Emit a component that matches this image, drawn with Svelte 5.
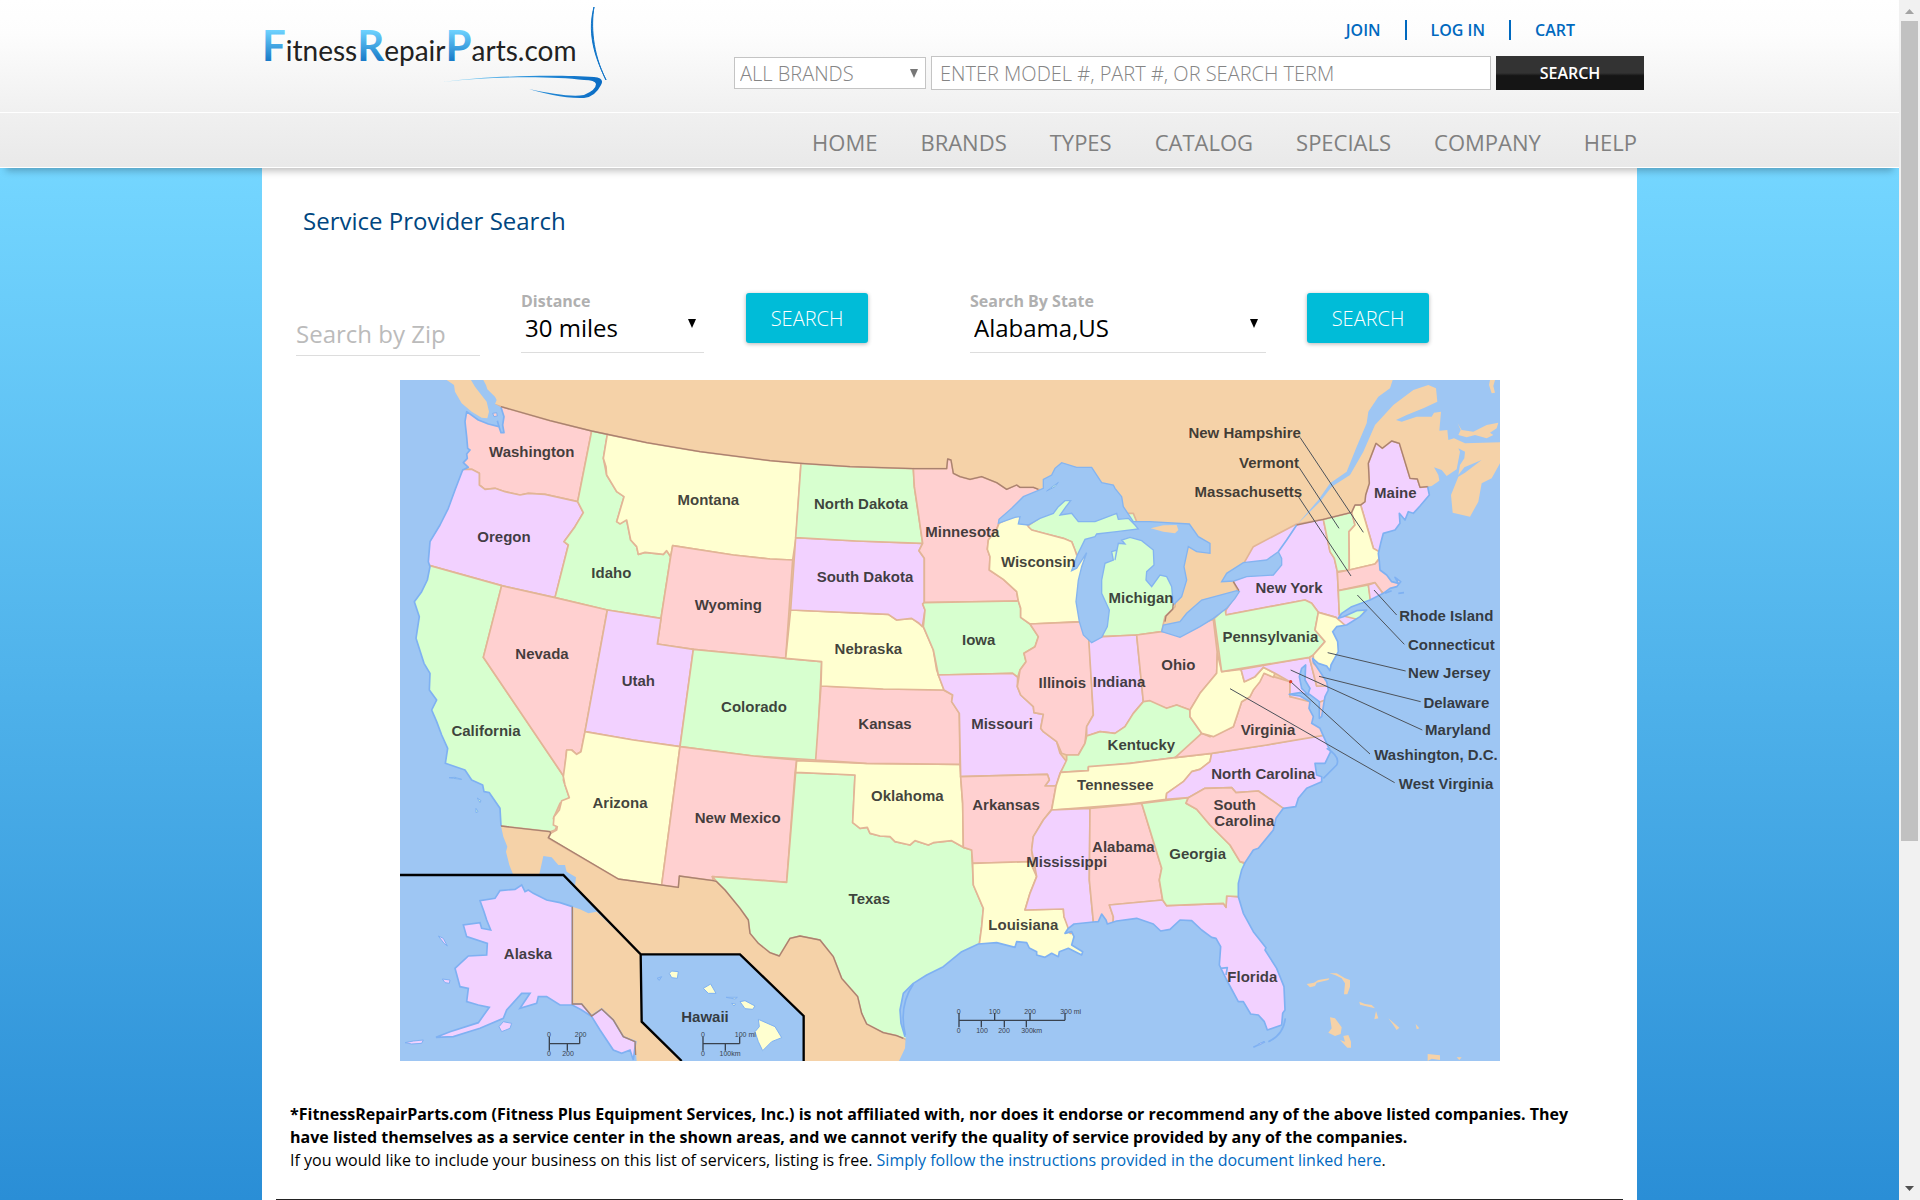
<script>
  const nav = ['HOME', 'BRANDS', 'TYPES', 'CATALOG', 'SPECIALS', 'COMPANY', 'HELP'];

  const G = '#d7ffcf', P = '#f2d1ff', R = '#ffd0d0', Y = '#ffffd0';

  const states = [
    [R, '303,80 450,122 575,153 533,365 435,343 385,340 360,345 315,335 285,325 255,328 238,315 238,280 215,268 190,268 160,230 180,80 240,60'],
    [P, '215,268 238,280 238,315 255,328 285,325 315,335 360,345 385,340 435,343 533,365 550,398 525,440 492,485 505,495 465,653 305,617 90,557 60,550 60,480 160,268'],
    [G, '575,153 622,163 610,235 620,285 650,335 672,350 650,425 680,420 692,480 710,500 715,523 735,517 790,523 800,512 812,530 783,715 622,690 465,653 505,495 492,485 525,440 550,398 533,365'],
    [Y, '622,163 740,188 900,215 1110,242 1203,250 1188,473 1178,540 1110,537 1000,525 818,497 812,530 800,512 790,523 735,517 715,523 710,500 692,480 680,420 660,432 650,425 672,350 650,335 620,285 618,260 610,235'],
    [R, '818,497 1000,525 1110,537 1178,540 1157,835 880,808 772,792 783,715 812,530'],
    [G, '90,557 305,617 250,832 492,1190 490,1200 508,1253 480,1270 460,1315 470,1340 465,1350 450,1355 303,1338 100,1338 -20,660'],
    [R, '305,617 465,653 622,690 555,1055 543,1115 530,1123 515,1110 500,1110 498,1130 492,1190 250,832'],
    [P, '622,690 783,715 772,792 880,808 840,1100 700,1080 555,1055'],
    [G, '880,808 1157,835 1265,845 1250,1140 1060,1128 840,1100'],
    [Y, '555,1055 700,1080 840,1100 785,1515 655,1497 445,1375 452,1360 470,1350 472,1340 460,1335 462,1310 478,1290 485,1262 508,1253 495,1215 490,1190 498,1130 500,1110 515,1110 530,1123 543,1115'],
    [R, '840,1100 1060,1128 1190,1140 1185,1180 1160,1507 937,1490 940,1502 838,1488 835,1522 785,1515'],
    [G, '1187,1177 1365,1185 1358,1328 1380,1345 1402,1342 1410,1360 1440,1368 1470,1370 1485,1385 1530,1395 1545,1382 1585,1395 1600,1388 1655,1382 1690,1402 1715,1410 1720,1515 1750,1585 1745,1640 1738,1692 1738,1760 1560,2000 1510,1975 1490,1967 1450,1958 1400,1932 1385,1900 1373,1850 1325,1795 1300,1730 1260,1680 1200,1668 1170,1675 1138,1728 1110,1718 1075,1690 1050,1660 1045,1620 1020,1585 975,1530 950,1505 937,1490 1160,1507'],
    [Y, '1190,1142 1400,1150 1680,1153 1682,1190 1688,1270 1690,1402 1655,1382 1600,1388 1585,1395 1545,1382 1530,1395 1485,1385 1470,1370 1440,1368 1410,1360 1402,1342 1380,1345 1358,1328 1365,1185 1187,1177'],
    [R, '1263,918 1450,927 1630,930 1658,945 1655,965 1678,1000 1680,1153 1400,1150 1247,1140'],
    [Y, '1172,690 1465,703 1490,720 1535,715 1570,740 1600,810 1610,870 1632,930 1450,927 1263,918 1265,845 1157,835'],
    [P, '1187,473 1370,483 1568,490 1557,512 1573,535 1573,668 1568,672 1575,690 1567,740 1555,728 1535,715 1490,720 1465,703 1172,690'],
    [G, '1203,250 1350,260 1540,266 1543,320 1555,400 1568,490 1370,483 1187,473'],
    [R, '1540,266 1640,266 1643,237 1653,240 1660,280 1680,290 1710,298 1745,290 1790,308 1820,328 1850,315 1860,322 1900,322 1915,328 1960,340 1797,430 1790,448 1765,480 1762,508 1770,530 1768,570 1810,598 1850,635 1855,663 1573,668 1573,535 1557,512 1568,490 1555,400 1543,320'],
    [G, '1573,668 1855,663 1862,685 1862,712 1890,732 1915,770 1905,800 1872,820 1878,845 1860,870 1853,892 1838,880 1615,885 1600,810 1570,740 1575,690 1568,672'],
    [G, '1880,440 1940,400 2010,340 2060,400 2200,400 2220,450 2040,530 2030,525 2015,485 1990,475 1940,462 1895,450'],
    [Y, '1797,430 1860,400 1885,440 1895,450 1940,462 1990,475 2015,485 2025,510 2030,525 2080,500 2040,725 1890,732 1862,712 1862,685 1855,663 1850,635 1810,598 1768,570 1770,530 1762,508 1765,480 1790,448'],
    [G, '2090,480 2200,460 2330,560 2325,680 2295,710 2285,755 2210,765 2110,770 2080,700 2080,560'],
    [P, '1615,885 1838,880 1853,892 1852,920 1862,945 1900,980 1902,998 1930,1003 1922,1045 1930,1055 1970,1085 1980,1120 2000,1145 1980,1180 1968,1218 1935,1218 1948,1200 1942,1183 1682,1190 1678,1000 1655,965 1658,945 1632,930'],
    [R, '1682,1190 1942,1183 1948,1200 1935,1218 1968,1218 1955,1288 1930,1320 1900,1370 1895,1410 1900,1445 1718,1450 1715,1410 1690,1402 1688,1270'],
    [Y, '1718,1450 1890,1445 1910,1490 1890,1540 1875,1590 1990,1587 1992,1610 2010,1645 2080,1760 1800,1780 1738,1760 1738,1692 1745,1640 1750,1585 1720,1515'],
    [R, '1890,732 2065,725 2068,780 2078,970 2080,1005 2060,1040 2055,1090 2035,1125 2000,1125 1985,1120 1970,1085 1930,1055 1922,1045 1930,1003 1902,998 1900,980 1862,945 1852,920 1860,870 1878,845 1872,820 1905,800 1915,770'],
    [P, '2066,775 2110,770 2210,765 2230,965 2200,1000 2175,1040 2145,1060 2100,1055 2060,1068 2060,1040 2080,1005 2078,970'],
    [R, '2210,765 2285,755 2340,750 2440,718 2452,820 2450,880 2400,940 2370,990 2330,975 2300,985 2230,965'],
    [G, '2230,965 2250,962 2300,985 2330,975 2370,990 2370,1010 2405,1060 2365,1110 2325,1133 2190,1150 2065,1163 2065,1172 1982,1177 2000,1140 2000,1125 2035,1125 2055,1090 2060,1068 2100,1055 2145,1060 2175,1040 2200,1000'],
    [Y, '1982,1177 2065,1172 2065,1160 2190,1150 2325,1133 2435,1120 2430,1145 2400,1168 2375,1175 2350,1205 2300,1240 2298,1258 2190,1272 1955,1290 1968,1218'],
    [P, '1955,1290 2070,1285 2068,1500 2080,1625 2080,1660 2010,1660 1992,1610 1990,1587 1875,1590 1890,1540 1910,1490 1895,1410 1900,1370 1930,1320'],
    [R, '2070,1285 2225,1270 2285,1465 2278,1500 2288,1560 2128,1575 2140,1610 2138,1650 2080,1650 2080,1625 2068,1500'],
    [P, '2128,1575 2288,1560 2300,1577 2470,1570 2478,1582 2480,1548 2515,1550 2560,1550 2700,1750 2680,1960 2580,1970 2440,1800 2440,1700 2260,1700 2138,1670 2140,1610'],
    [G, '2225,1270 2365,1253 2358,1270 2390,1288 2430,1335 2490,1395 2520,1445 2560,1460 2560,1550 2515,1550 2480,1548 2478,1582 2470,1570 2300,1577 2288,1560 2278,1500 2285,1465'],
    [P, '2435,1120 2600,1095 2770,1063 2840,1060 2840,1200 2700,1310 2650,1285 2575,1233 2508,1238 2495,1223 2415,1225 2365,1253 2298,1258 2300,1240 2350,1205 2375,1175 2400,1168 2430,1145'],
    [R, '2365,1253 2415,1225 2495,1223 2508,1238 2575,1233 2650,1285 2680,1310 2540,1450 2520,1445 2490,1395 2430,1335 2390,1288 2358,1270'],
    [R, '2325,1133 2405,1060 2430,1070 2500,1040 2510,1010 2525,965 2550,950 2560,930 2592,880 2620,890 2670,905 2670,950 2790,960 2790,1063 2600,1095 2435,1120'],
    [Y, '2452,820 2465,875 2523,868 2533,905 2565,890 2590,862 2625,880 2620,892 2592,880 2580,905 2560,930 2550,950 2525,965 2510,1010 2500,1040 2470,1055 2440,1070 2405,1060 2370,1010 2370,990 2400,940 2450,880'],
    [P, '2523,868 2728,832 2750,918 2785,918 2800,950 2750,970 2670,950 2670,905 2625,880 2590,862 2565,890 2533,905'],
    [R, '2728,832 2745,822 2790,900 2785,918 2750,918'],
    [P, '2475,705 2478,690 2515,635 2500,605 2560,500 2690,432 2770,418 2790,515 2803,535 2812,575 2818,705 2910,680 2910,700 2830,760 2808,712 2755,697 2735,670 2715,660'],
    [G, '2443,715 2475,685 2478,705 2715,660 2735,670 2755,697 2745,750 2775,785 2740,825 2728,832 2465,875'],
    [Y, '2755,697 2808,712 2840,740 2840,820 2790,890 2740,850 2740,825 2775,785 2745,750'],
    [G, '2770,418 2855,397 2865,435 2847,455 2848,570 2812,575 2803,535 2790,515'],
    [P, '2882,375 2895,365 2897,345 2908,310 2905,250 2928,190 2947,205 2975,183 2998,190 3030,295 3052,297 3060,322 3083,320 3120,340 3040,450 2960,530 2938,520 2920,505'],
    [Y, '2855,397 2865,375 2882,375 2920,505 2938,515 2938,535 2925,552 2848,570 2847,455 2865,435'],
    [R, '2812,577 2848,570 2925,552 2940,535 2980,540 3020,600 2980,660 2945,635 2925,608 2815,632'],
    [G, '2815,632 2905,615 2912,658 2880,720 2818,705'],
    [P, '2905,615 2925,608 2945,635 2960,670 2912,670']
  ];

  const westCoast = '303,82 312,110 308,135 312,158 303,158 297,140 265,132 235,120 200,95 195,125 200,170 203,205 210,210 200,222 202,235 190,248 205,262 188,270 165,330 145,385 120,435 90,485 85,545 90,560 82,600 65,635 43,665 58,710 48,775 72,850 90,880 88,930 110,960 95,990 110,1025 125,1065 143,1105 136,1150 195,1170 215,1200 248,1215 252,1235 268,1238 300,1285 303,1338';

  const eastCoast = '1515,1970 1503,1930 1500,1890 1510,1840 1540,1810 1580,1785 1630,1760 1685,1715 1735,1692 1790,1688 1845,1702 1850,1685 1880,1688 1888,1704 1910,1715 1910,1725 1935,1732 1955,1720 1975,1730 1978,1715 2005,1705 2045,1725 2048,1715 2015,1695 2022,1670 2015,1655 1995,1660 2005,1645 2022,1632 2080,1626 2095,1625 2105,1602 2118,1620 2122,1632 2150,1623 2210,1615 2260,1632 2282,1653 2310,1648 2340,1620 2375,1622 2405,1650 2435,1672 2448,1675 2462,1700 2458,1755 2480,1800 2515,1865 2530,1865 2552,1902 2575,1905 2593,1925 2602,1950 2645,1935 2648,1900 2655,1890 2652,1820 2630,1765 2595,1710 2598,1703 2560,1655 2530,1600 2515,1550 2515,1510 2525,1470 2535,1448 2560,1410 2575,1405 2620,1350 2628,1315 2650,1285 2687,1280 2695,1255 2720,1225 2765,1205 2765,1190 2750,1185 2745,1150 2775,1150 2792,1115 2780,1090 2768,1063 2760,1045 2735,1030 2740,1010 2727,985 2730,965 2700,948 2668,943 2700,938 2725,945 2705,925 2698,890 2705,865 2717,855 2715,900 2730,925 2725,940 2745,955 2758,965 2758,1015 2765,1010 2775,950 2785,930 2780,905 2760,875 2740,845 2738,835 2755,850 2780,858 2790,872 2793,855 2815,815 2813,785 2798,755 2810,740 2840,735 2880,710 2900,690 2870,692 2830,710 2815,715 2825,700 2855,680 2910,660 2950,640 2970,625 2990,620 3002,605 2985,592 2995,610 2975,605 2960,585 2940,570 2938,545 2935,520 2942,490 2950,460 2985,450 3000,430 2998,400 3015,420 3025,395 3040,400 3060,378 3088,345 3083,320';

  const waters = [
    `0,0 250,0 258,15 262,28 285,50 290,60 285,72 303,82 ${westCoast} 310,1370 322,1400 318,1415 328,1455 340,1485 0,1485`,
    `1497,2043 1515,2005 1517,1972 ${eastCoast} 3095,318 3118,302 3115,285 3102,262 3125,270 3140,288 3170,268 3180,215 3175,205 3195,215 3193,235 3180,255 3175,285 3193,262 3245,240 3195,278 3175,290 3153,345 3158,398 3210,410 3235,365 3245,310 3275,295 3300,250 3300,2043`,
    '2978,0 2970,25 2935,50 2905,95 2900,130 2870,200 2840,275 2790,310 2755,360 2690,435 2760,365 2795,320 2850,285 2890,215 2925,135 2980,75 3040,30 3085,15 3108,25 3112,65 3070,85 3020,105 2988,120 3005,125 3050,110 3095,110 3102,98 3123,95 3118,152 3142,150 3145,180 3162,175 3195,190 3300,187 3300,0',
    '418,1483 430,1428 455,1432 475,1455 495,1455 500,1475 528,1492 525,1518 490,1485'
  ];

  const lakes = [
    '1797,418 1795,430 1845,412 1860,410 1855,432 1885,435 1920,415 1960,400 1975,380 1995,362 2012,362 1998,380 1980,405 2015,400 2035,425 2085,425 2150,400 2155,418 2185,415 2205,435 2215,447 2150,455 2090,462 2085,470 2055,478 2032,525 2015,572 2030,565 2060,518 2045,560 2035,600 2028,665 2038,725 2050,765 2075,788 2105,772 2122,740 2128,690 2105,640 2105,600 2115,550 2140,540 2135,515 2150,510 2145,540 2155,490 2175,492 2165,480 2190,472 2225,482 2260,510 2262,555 2240,575 2238,600 2255,620 2280,585 2300,590 2315,620 2320,675 2345,650 2360,600 2352,560 2365,500 2390,515 2430,520 2430,490 2395,470 2368,432 2250,425 2200,425 2170,380 2165,350 2145,325 2140,315 2105,308 2075,262 2030,262 1985,248 1965,265 1955,285 1930,298 1930,325 1870,350 1835,385',
    '2285,755 2290,735 2340,725 2360,700 2405,660 2510,632 2518,635 2505,655 2480,685 2440,715 2400,740 2340,772',
    '2465,605 2480,580 2530,548 2600,540 2635,515 2645,535 2645,555 2620,585 2540,590 2502,603'
  ];

  const islands = [
    ['#f5d2a8', '140,0 162,15 165,35 185,70 215,95 245,113 262,115 267,95 260,65 240,40 225,20 213,0'],
    ['#f5d2a8', '3173,130 3185,150 3220,155 3260,135 3295,128 3290,145 3270,158 3280,165 3260,175 3225,165 3200,172 3175,165 3182,150'],
    ['#f5d2a8', '3270,0 3285,0 3280,18 3285,38 3275,40 3267,15'],
    ['#f5d2a8', '2252,445 2290,436 2330,435 2335,450 2325,460 2290,455'],
    ['#f5d2a8', '2720,1812 2730,1822 2745,1818 2750,1808 2785,1800 2788,1795 2755,1800 2742,1808'],
    ['#f5d2a8', '2788,1780 2810,1780 2835,1795 2850,1800 2850,1820 2842,1843 2832,1843 2835,1810 2825,1795 2805,1785'],
    ['#f5d2a8', '2790,1912 2805,1915 2825,1942 2822,1962 2805,1968 2785,1958 2795,1945'],
    ['#f5d2a8', '2830,1968 2845,1965 2853,1985 2853,2003 2842,2003 2820,1980 2835,1985'],
    ['#f5d2a8', '2878,1865 2895,1872 2915,1875 2925,1885 2905,1880 2880,1874'],
    ['#f5d2a8', '2928,1893 2935,1915 2923,1918'],
    ['#f5d2a8', '2965,1915 2998,1943 2990,1950 2978,1932'],
    ['#f5d2a8', '3047,1932 3058,1945 3050,1948'],
    ['#f5d2a8', '3083,2022 3120,2026 3120,2040 3095,2036 3083,2043'],
    ['#f5d2a8', '3170,2032 3185,2032 3178,2040']
  ];

  const borders = [
    '303,80 450,122 575,153 740,188 900,215 1110,242 1203,250 1350,260 1540,266 1640,266 1643,237 1653,240 1660,280 1680,290 1710,298 1745,290 1790,308 1820,328 1850,315 1860,322 1900,322 1915,328',
    '303,1338 450,1355 452,1360 445,1373 655,1497 835,1522 838,1488 940,1502 950,1505 975,1530 1020,1585 1045,1620 1050,1660 1075,1690 1110,1718 1138,1728 1170,1675 1200,1668 1260,1680 1300,1730 1325,1795 1373,1850 1385,1900 1400,1932 1450,1958 1490,1967 1510,1975',
    '2690,435 2770,418 2855,397 2865,375 2882,375 2895,365 2897,345 2908,310 2905,250 2928,190 2947,205 2975,183 2998,190 3030,295 3052,297 3060,322 3083,320',
    '2320,670 2318,688 2298,708 2295,725',
    '2500,605 2517,632'
  ];

  const alaska = '517,1580 480,1568 440,1560 400,1540 385,1530 375,1535 365,1515 345,1528 300,1532 285,1555 240,1562 252,1595 260,1620 272,1650 245,1645 240,1628 190,1635 200,1670 262,1690 260,1725 205,1728 165,1765 180,1820 205,1825 200,1865 235,1875 268,1882 235,1928 150,1955 108,1972 160,1970 240,1945 310,1915 320,1890 365,1840 390,1840 360,1885 410,1870 415,1850 440,1850 480,1875 517,1875 545,1890 575,1910 600,1950 640,2010 665,2020 690,2010 700,2040 707,1985 670,1970 640,1920 605,1887 575,1908 545,1872 517,1872';

  const smallIslands = [
    [P, '297,1940 310,1925 335,1930 330,1945 305,1955'],
    [P, '127,1797 150,1800 148,1810 135,1808'],
    [P, '115,1668 130,1675 142,1698 132,1690'],
    [P, '15,1988 40,1983 70,1980 65,1990 35,1992'],
    [Y, '808,1780 815,1773 835,1775 832,1795 815,1793'],
    [Y, '910,1825 932,1812 948,1840 925,1840'],
    [Y, '978,1852 1012,1852 1005,1857'],
    [Y, '995,1870 1007,1872 1002,1878'],
    [Y, '1020,1865 1035,1862 1065,1878 1058,1888 1035,1886'],
    [Y, '1075,1918 1125,1940 1145,1973 1115,1985 1088,2012 1075,1985 1065,1955 1078,1940'],
    ['#9ec6f3', '771,1795 785,1790 778,1801'],
    [G, '147,1193 160,1195 185,1198 165,1192'],
    [G, '232,1254 243,1262 240,1268'],
    [G, '228,1285 234,1295 228,1298'],
    [G, '1940,333 1975,307 1965,320'],
    [R, '278,100 290,98 292,108 282,110'],
    [P, '2575,1992 2592,1985 2580,1995']
  ];

  const leaders = [
    '2700,172 2890,457', '2697,262 2817,445', '2694,348 2853,588', '2922,630 2990,705',
    '2872,645 3013,793', '2783,818 3017,873', '2757,889 3062,965', '2672,870 3067,1050',
    '2672,905 2910,1122', '2490,926 2984,1208'
  ];

  const labels = [
    ['Washington', 395, 232], ['Montana', 925, 376], ['Oregon', 312, 487], ['Idaho', 634, 595],
    ['Wyoming', 985, 690], ['Nevada', 426, 838], ['Utah', 715, 917], ['Colorado', 1062, 995],
    ['California', 258, 1069], ['Arizona', 660, 1283], ['New Mexico', 1013, 1328],
    ['North Dakota', 1383, 388], ['South Dakota', 1395, 607], ['Minnesota', 1687, 471],
    ['Wisconsin', 1915, 562], ['Nebraska', 1405, 822], ['Iowa', 1736, 796], ['Illinois', 1987, 924],
    ['Indiana', 2157, 921], ['Michigan', 2223, 669], ['Kansas', 1455, 1048], ['Missouri', 1806, 1048],
    ['Oklahoma', 1522, 1262], ['Texas', 1408, 1572], ['Arkansas', 1818, 1291], ['Louisiana', 1870, 1650],
    ['Mississippi', 2000, 1461], ['Alabama', 2170, 1415], ['Tennessee', 2146, 1229], ['Kentucky', 2224, 1111],
    ['Georgia', 2393, 1436], ['Florida', 2557, 1807], ['South', 2504, 1291], ['Carolina', 2533, 1337],
    ['North Carolina', 2590, 1197], ['Virginia', 2604, 1065], ['Ohio', 2335, 871],
    ['Pennsylvania', 2611, 785], ['New York', 2667, 640], ['Maine', 2986, 355],
    ['New Hampshire', 2534, 174], ['Vermont', 2607, 264], ['Massachusetts', 2545, 351],
    ['Rhode Island', 3139, 723], ['Connecticut', 3154, 809], ['New Jersey', 3148, 893],
    ['Delaware', 3169, 983], ['Maryland', 3174, 1066], ['Washington, D.C.', 3108, 1139],
    ['West Virginia', 3138, 1226], ['Alaska', 384, 1737], ['Hawaii', 915, 1926]
  ];

  const scaleText = [
    ['0', 447, 1971], ['200', 542, 1971], ['0', 447, 2029], ['200', 504, 2029],
    ['0', 909, 1971], ['100 mi', 1036, 1971], ['0', 909, 2029], ['100km', 990, 2029],
    ['0', 1676, 1902], ['100', 1784, 1902], ['200', 1890, 1902], ['300 mi', 2012, 1902],
    ['0', 1676, 1960], ['100', 1746, 1960], ['200', 1812, 1960], ['300km', 1895, 1960]
  ];
</script>

<div class="window">
  <div class="page">
    <header>
      <div class="top">
        <div class="inner top-row">
          <a class="logo" href="/" aria-label="FitnessRepairParts.com">
            <svg width="350" height="104" viewBox="0 0 350 104">
              <defs>
                <linearGradient id="cap" x1="0" y1="0" x2="0" y2="1">
                  <stop offset="0.2" stop-color="#6fd3ff" /><stop offset="0.8" stop-color="#1a7cc9" />
                </linearGradient>
                <linearGradient id="swoosh" x1="0" y1="0" x2="1" y2="0">
                  <stop offset="0" stop-color="#8edcfb" /><stop offset="0.5" stop-color="#2b93dc" /><stop offset="1" stop-color="#0a6cc4" />
                </linearGradient>
              </defs>
              <text x="0" y="61" class="brand"><tspan class="cap">F</tspan>itness<tspan class="cap">R</tspan>epair<tspan class="cap">P</tspan>arts.com</text>
              <path d="M332 7C329 25 330 52 344 80C336 63 324 37 332 7Z" fill="#0f74c8" stroke="#0f74c8" />
              <path d="M181 82C230 75 300 75 332 77Q343 78 339 85Q333 97 322 98C305 99 280 93 267 89C290 94 310 97 322 95Q334 90 334 84Q333 80 322 80C290 76 230 76 181 82Z" fill="url(#swoosh)" />
            </svg>
          </a>
          <div class="tools">
            <ul class="account">
              <li><a href="/join">JOIN</a></li>
              <li><a href="/login">LOG IN</a></li>
              <li><a href="/cart">CART</a></li>
            </ul>
            <form class="finder">
              <span class="pick">
                <select aria-label="Brand"><option>ALL BRANDS</option></select>
                <svg width="8" height="9" viewBox="0 0 8 9"><path d="M0 0H8L4 9Z" fill="#777" /></svg>
              </span>
              <input type="text" aria-label="Search term" placeholder="ENTER MODEL #, PART #, OR SEARCH TERM" />
              <button type="button">SEARCH</button>
            </form>
          </div>
        </div>
      </div>
      <nav>
        <ul class="inner">
          {#each nav as item}
            <li><a href="/{item.toLowerCase()}">{item}</a></li>
          {/each}
        </ul>
      </nav>
    </header>

    <main>
      <h1>Service Provider Search</h1>
      <form class="search">
        <input class="zip" type="text" aria-label="Zip" placeholder="Search by Zip" />
        <div class="field distance">
          <label for="distance">Distance</label>
          <select id="distance"><option>30 miles</option></select>
          <svg width="8" height="9" viewBox="0 0 8 9"><path d="M0 0H8L4 9Z" /></svg>
        </div>
        <button type="button">SEARCH</button>
        <div class="field state">
          <label for="state">Search By State</label>
          <select id="state"><option>Alabama,US</option></select>
          <svg width="8" height="9" viewBox="0 0 8 9"><path d="M0 0H8L4 9Z" /></svg>
        </div>
        <button type="button">SEARCH</button>
      </form>

      <svg class="map" viewBox="0 0 3300 2043" role="img" aria-label="Map of the United States">
        <rect width="3300" height="2043" fill="#f5d2a8" />
        <g stroke="#e2b596" stroke-width="5" stroke-linejoin="round">
          {#each states as [fill, pts]}<polygon points={pts} {fill} />{/each}
        </g>
        <g fill="#9ec6f3">
          {#each waters as pts}<polygon points={pts} />{/each}
        </g>
        <g fill="#9ec6f3" stroke="#84b4f0" stroke-width="4">
          {#each lakes as pts}<polygon points={pts} />{/each}
        </g>
        <g fill="none" stroke="#7fb1f2" stroke-width="5" stroke-linejoin="round">
          <polyline points={westCoast} />
          <polyline points={eastCoast} />
          <polyline points="2690,435 2660,480 2635,515" />
          <path d="M2780 1105Q2822 1130 2810 1155L2770 1195M2656 1915Q2650 1965 2605 1985M2595 1985L2560 2002M1540 1812Q1495 1880 1516 1965M2955 640L2975 632M2995 640L3012 638M297 140L292 122" />
          <path d="M2461 1765L2482 1763L2478 1785" />
        </g>
        {#each islands as [fill, pts]}<polygon points={pts} {fill} />{/each}
        <g fill="none" stroke="#a98270" stroke-width="4" stroke-linejoin="round">
          {#each borders as pts}<polyline points={pts} />{/each}
        </g>

        <polygon fill="#9ec6f3" points="0,1485 490,1485 722,1723 725,1925 845,2043 0,2043" />
        <polygon fill="#f5d2a8" points="517,1580 540,1588 565,1600 590,1595 722,1723 725,1925 845,2043 710,2043 705,1985 670,1970 640,1920 605,1887 575,1908 545,1872 517,1872" />
        <polygon fill="#9ec6f3" points="722,1723 1020,1723 1211,1908 1211,2043 845,2043 725,1925" />
        <polygon fill={P} stroke="#7fb1f2" stroke-width="5" points={alaska} />
        <polyline fill="none" stroke="#a98270" stroke-width="4" points="517,1580 517,1872 545,1872 575,1908 605,1887 640,1920 670,1970 705,1985 707,2025" />
        <g stroke="#7fb1f2" stroke-width="3">
          {#each smallIslands as [fill, pts]}<polygon points={pts} {fill} />{/each}
        </g>
        <path d="M0 1485H490L722 1723H1020L1211 1908V2043M722 1723L725 1925L845 2043" fill="none" stroke="#000" stroke-width="7" />

        <g fill="none" stroke="#4c525a" stroke-width="3">
          {#each leaders as pts}<polyline points={pts} />{/each}
        </g>
        <circle cx="2672" cy="905" r="5" fill="#d8432f" />
        <path d="M448 1970V2012M448 1991H539M539 1970V1991M502 1991V2012M909 1970V2012M909 1991H1019M1019 1970V1991M976 1991V2012M1677 1899V1942M1677 1921H1995M1784 1899V1921M1890 1899V1921M1995 1899V1921M1744 1921V1942M1813 1921V1942M1879 1921V1942" fill="none" stroke="#39424e" stroke-width="4" />
        {#each scaleText as [t, x, y]}<text class="tick" {x} {y}>{t}</text>{/each}
        {#each labels as [t, x, y]}<text class="name" {x} {y}>{t}</text>{/each}
      </svg>

      <p>
        <strong>*FitnessRepairParts.com (Fitness Plus Equipment Services, Inc.) is not affiliated with, nor does it endorse or recommend any of the above listed companies. They have listed themselves as a service center in the shown areas, and we cannot verify the quality of service provided by any of the companies.</strong><br />
        If you would like to include your business on this list of servicers, listing is free.
        <a href="/listing">Simply follow the instructions provided in the document linked here</a>.
      </p>
      <hr />
    </main>
  </div>
  <div class="scrollbar" aria-hidden="true">
    <svg width="9" height="5" viewBox="0 0 9 5"><path d="M0 5L4.500 0L9 5Z" fill="#a3a3a3" /></svg>
    <div class="thumb"></div>
    <svg width="9" height="5" viewBox="0 0 9 5"><path d="M0 0L4.500 5L9 0Z" fill="#505050" /></svg>
  </div>
</div>

<style>
  .window {
    display: flex;
    height: 100vh;
    overflow: hidden;
    font-family: 'Open Sans', sans-serif;
    color: #000;
  }
  .page {
    flex: 1;
    min-width: 0;
    overflow: hidden;
    background: linear-gradient(#74d6ff 168px, #2a8ed6);
  }
  a { text-decoration: none; color: #0069bf; }
  ul { list-style: none; margin: 0; padding: 0; }
  button, input, select {
    font-family: inherit;
    box-sizing: border-box;
    margin: 0;
    appearance: none;
    border-radius: 0;
  }
  header {
    position: relative;
    box-shadow: 0 9px 7px -6px rgba(0, 0, 0, 0.25);
  }
  .inner {
    box-sizing: border-box;
    width: 100%;
    max-width: 1375px;
    margin: 0 auto;
  }
  .top {
    height: 112px;
    background: linear-gradient(#fff, #fdfdfd 30%, #f0f0f0);
    border-bottom: 1px solid #fff;
  }
  .top-row { display: flex; justify-content: space-between; }
  .logo svg { display: block; }
  .brand {
    font-family: Lato, sans-serif;
    font-size: 28px;
    fill: #222;
  }
  .cap { font-size: 42px; fill: url(#cap); font-weight: bold; }
  .tools { flex: 0 0 910px; margin-right: -7px; }
  .account { display: flex; justify-content: flex-end; padding: 20px 69px 0 0; line-height: 20px; }
  .account li { font-size: 16px; font-weight: 600; }
  .account li + li { border-left: 2px solid #0069bf; margin-left: 24px; padding-left: 24px; }
  .finder { display: flex; gap: 5px; align-items: center; padding-top: 16px; }
  .pick, .field { position: relative; }
  .finder select, .finder input {
    border: 1px solid #c4c4c4;
    background: #fff;
    color: #858585;
    font-size: 20px;
    font-weight: 300;
    display: block;
  }
  .finder select { width: 192px; height: 32px; padding: 0 5px; }
  .pick svg { position: absolute; right: 8px; top: 12px; }
  .finder input { flex: 1; min-width: 0; height: 34px; padding: 0 8px; }
  .finder input::placeholder { color: #858585; opacity: 1; }
  .finder button {
    width: 148px;
    height: 34px;
    border: 0;
    color: #fff;
    font-size: 16px;
    font-weight: 600;
    background: linear-gradient(#333 50%, #151515 58%);
  }
  nav {
    height: 54px;
    background: linear-gradient(#f0f0f0, #e9e9e9);
    border-bottom: 1px solid #fff;
  }
  nav ul { display: flex; justify-content: flex-end; gap: 43px; line-height: 58px; }
  nav a { font-size: 22px; font-weight: 500; color: #808080; }
  main {
    box-sizing: border-box;
    width: 100%;
    max-width: 1375px;
    min-height: 1040px;
    margin: 0 auto;
    padding: 35px 14px 0;
    background: #fff;
  }
  h1 { margin: 0 0 0 27px; font-size: 24px; line-height: 36px; font-weight: 500; color: #004680; }
  .search { display: flex; align-items: flex-start; margin: 54px 0 0 20px; height: 64px; }
  .zip {
    width: 184px;
    height: 47px;
    margin: 16px 41px 0 0;
    padding: 2px 0 0;
    border: 0;
    border-bottom: 1px solid #ddd;
    font-size: 24px;
    color: #000;
  }
  .zip::placeholder { color: #bbb; opacity: 1; }
  .field { height: 59px; border-bottom: 1px solid #ddd; }
  .distance { width: 183px; margin-right: 42px; }
  .state { width: 296px; margin: 0 41px 0 102px; }
  .field label { display: block; font-size: 16px; line-height: 16px; font-weight: 700; color: #b0b0b0; }
  .field select {
    width: 100%;
    height: 36px;
    padding: 0 4px;
    border: 0;
    background: transparent;
    font-size: 24px;
    color: #000;
    display: block;
  }
  .field svg { position: absolute; right: 8px; top: 26px; }
  .search button {
    width: 122px;
    height: 50px;
    border: 0;
    border-radius: 3px;
    background: #00bcd8;
    color: #fff;
    font-size: 20px;
    font-weight: 300;
    box-shadow: 0 1px 4px rgba(0, 0, 0, 0.3);
  }
  .map { display: block; width: 1100px; max-width: 100%; margin: 23px auto 0; }
  .name {
    font: bold 45px 'Liberation Sans', sans-serif;
    fill: #222;
    fill-opacity: 0.85;
    text-anchor: middle;
  }
  .tick { font: 21px 'Liberation Sans', sans-serif; fill: #39424e; text-anchor: middle; }
  p { margin: 42px 50px 0 14px; font-size: 16px; line-height: 23px; }
  hr { margin: 27px 0 0; border: 0; border-top: 1px solid #222; }
  .scrollbar {
    flex: 0 0 21px;
    display: flex;
    flex-direction: column;
    align-items: center;
    padding: 9px 0;
    box-sizing: border-box;
    background: #f1f1f1;
  }
  .thumb { width: 17px; flex: 0 1 820px; margin: 7px 0 auto; background: #c1c1c1; }
</style>
